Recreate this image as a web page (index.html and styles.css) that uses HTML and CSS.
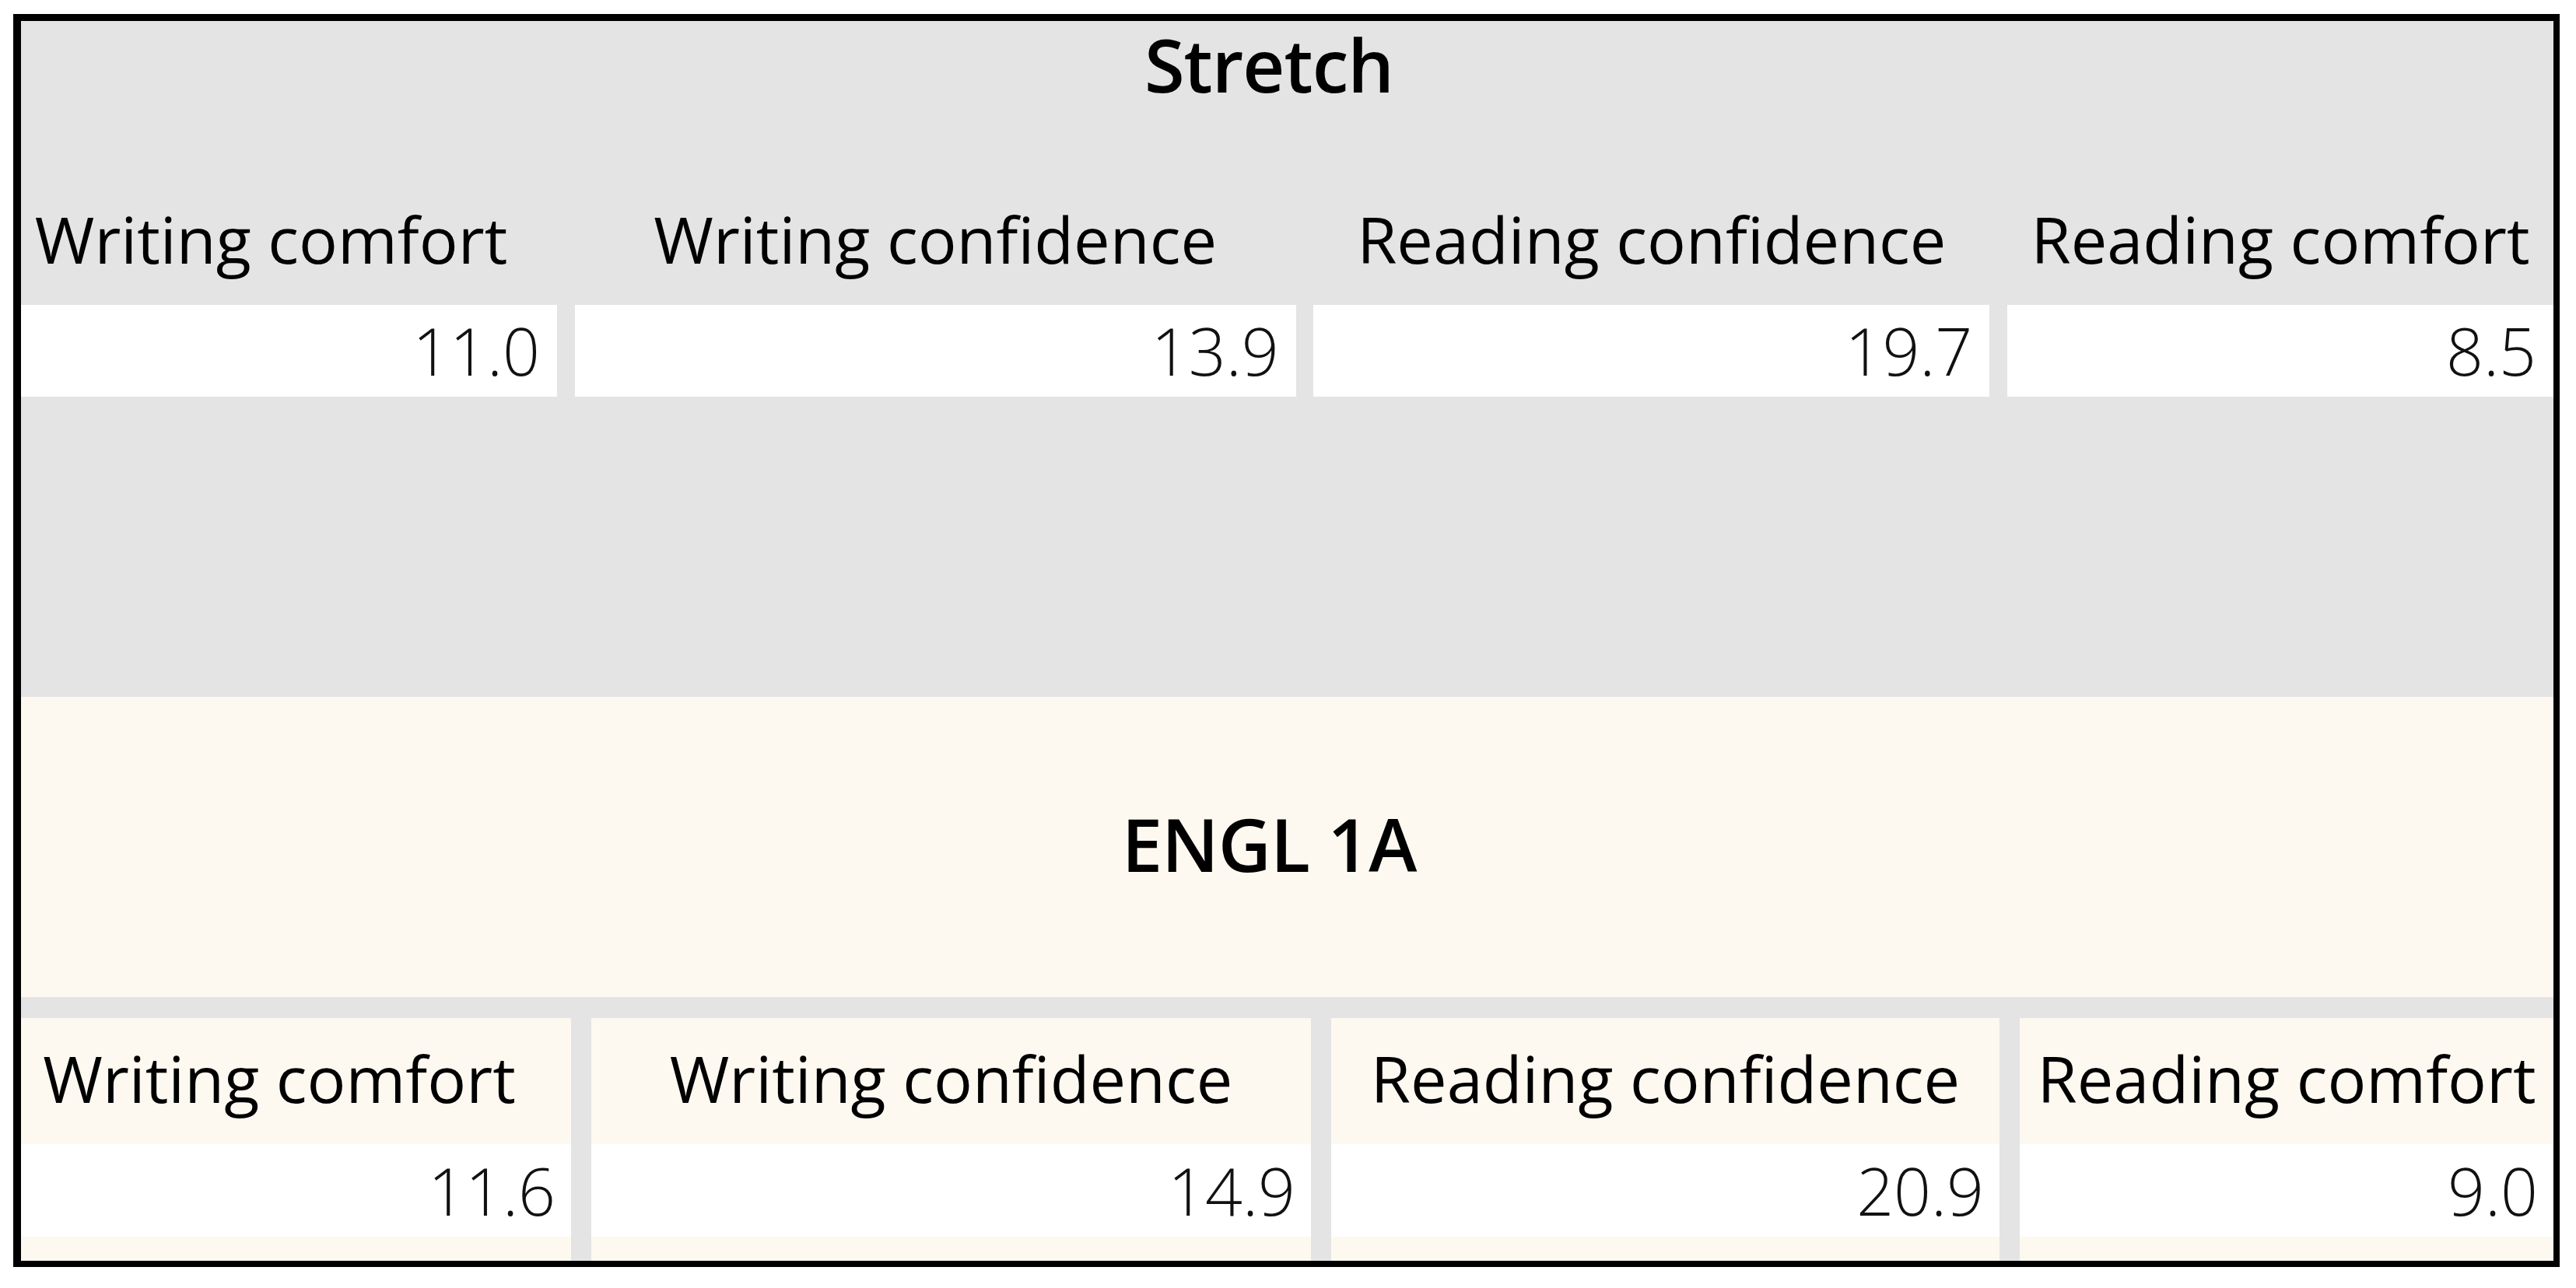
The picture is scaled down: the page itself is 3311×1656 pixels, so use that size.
FILE: index.html
```html
<!DOCTYPE html>
<html lang="en">
<head>
<meta charset="utf-8">
<title>Stretch vs ENGL 1A</title>
<link rel="stylesheet" href="styles.css">
</head>
<body>
<div class="frame">
  <section class="group group-stretch">
    <div class="group-title">Stretch</div>
    <div class="cols cols-top">
      <div class="col">
        <div class="label first">Writing comfort</div>
        <div class="value">11.0</div>
      </div>
      <div class="col">
        <div class="label">Writing confidence</div>
        <div class="value">13.9</div>
      </div>
      <div class="col">
        <div class="label">Reading confidence</div>
        <div class="value">19.7</div>
      </div>
      <div class="col">
        <div class="label">Reading comfort</div>
        <div class="value">8.5</div>
      </div>
    </div>
  </section>
  <section class="group group-engl">
    <div class="group-title engl-title">ENGL 1A</div>
    <div class="cols cols-bottom">
      <div class="col bcol">
        <div class="label blabel first-b">Writing comfort</div>
        <div class="value bvalue">11.6</div>
      </div>
      <div class="col bcol">
        <div class="label blabel">Writing confidence</div>
        <div class="value bvalue">14.9</div>
      </div>
      <div class="col bcol">
        <div class="label blabel">Reading confidence</div>
        <div class="value bvalue">20.9</div>
      </div>
      <div class="col bcol">
        <div class="label blabel">Reading comfort</div>
        <div class="value bvalue">9.0</div>
      </div>
    </div>
  </section>
</div>
</body>
</html>
```
FILE: styles.css
```css
html, body {
  margin: 0;
  padding: 0;
  background: #ffffff;
}

body {
  font-family: "Open Sans", "Noto Sans", "Liberation Sans", sans-serif;
  color: #000;
}

.frame {
  margin: 18px 0 0 17px;
  width: 3255px;
  height: 1594px;
  border-style: solid;
  border-color: #000;
  border-width: 9px 8px 8px 10px;
  background: #e4e4e4;
  display: flex;
  flex-direction: column;
  overflow: hidden;
}

.group-stretch {
  height: 869px;
  background: #e4e4e4;
  display: flex;
  flex-direction: column;
}

.group-title {
  font-size: 94px;
  font-weight: 600;
  line-height: 130px;
  height: 130px;
  margin-top: -9px;
  text-align: center;
  padding-right: 47px;
  letter-spacing: -1px;
}

.cols {
  display: grid;
}

.cols-top {
  margin-top: 109px;
  grid-template-columns: 689px 927px 869px 702px;
  column-gap: 22.67px;
}

.col {
  display: flex;
  flex-direction: column;
}

.label {
  font-size: 83px;
  line-height: 100px;
  height: 100px;
  text-align: center;
  white-space: nowrap;
}

.label.first {
  padding-right: 46px;
}

.value {
  margin-top: 35px;
  height: 118px;
  line-height: 118px;
  background: #ffffff;
  text-align: right;
  padding-right: 22px;
  font-size: 84px;
  font-weight: 300;
  color: #111;
}

.group-engl {
  flex: 1;
  display: flex;
  flex-direction: column;
  background: #e4e4e4;
}

.engl-title {
  height: 386px;
  line-height: 378px;
  margin-top: 0;
  background: #fdf9f1;
}

.cols-bottom {
  margin-top: 27px;
  flex: 1;
  grid-template-columns: 707px 925px 859px 686px;
  column-gap: 26px;
}

.bcol {
  background: #fdf9f1;
}

.blabel {
  height: 162px;
  line-height: 154px;
}

.label.first-b {
  padding-right: 43px;
}

.bvalue {
  margin-top: 0;
  height: 119px;
  line-height: 119px;
  padding-right: 20px;
}
```
